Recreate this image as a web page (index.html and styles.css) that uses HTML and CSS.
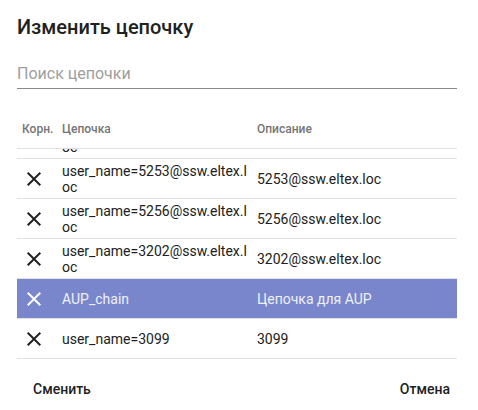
FILE: index.html
```html
<!DOCTYPE html>
<html lang="ru">
<head>
<meta charset="utf-8">
<title>Изменить цепочку</title>
<link rel="stylesheet" href="styles.css">
</head>
<body>
<div class="dialog">
  <h1 class="title">Изменить цепочку</h1>
  <div class="search">
    <input class="search-input" type="text" placeholder="Поиск цепочки">
  </div>
  <div class="table">
    <div class="row head">
      <div class="cell c1">Корн.</div>
      <div class="cell c2">Цепочка</div>
      <div class="cell c3">Описание</div>
    </div>
    <div class="body">
      <div class="rows">
        <div class="row item">
          <div class="cell c1"><svg class="x" viewBox="0 0 24 24"><path d="M19 6.41L17.59 5 12 10.59 6.41 5 5 6.41 10.59 12 5 17.59 6.41 19 12 13.41 17.59 19 19 17.59 13.41 12z"/></svg></div>
          <div class="cell c2">user_name=5250@ssw.eltex.loc</div>
          <div class="cell c3">5250@ssw.eltex.loc</div>
        </div>
        <div class="row item">
          <div class="cell c1"><svg class="x" viewBox="0 0 24 24"><path d="M19 6.41L17.59 5 12 10.59 6.41 5 5 6.41 10.59 12 5 17.59 6.41 19 12 13.41 17.59 19 19 17.59 13.41 12z"/></svg></div>
          <div class="cell c2">user_name=5253@ssw.eltex.loc</div>
          <div class="cell c3">5253@ssw.eltex.loc</div>
        </div>
        <div class="row item">
          <div class="cell c1"><svg class="x" viewBox="0 0 24 24"><path d="M19 6.41L17.59 5 12 10.59 6.41 5 5 6.41 10.59 12 5 17.59 6.41 19 12 13.41 17.59 19 19 17.59 13.41 12z"/></svg></div>
          <div class="cell c2">user_name=5256@ssw.eltex.loc</div>
          <div class="cell c3">5256@ssw.eltex.loc</div>
        </div>
        <div class="row item">
          <div class="cell c1"><svg class="x" viewBox="0 0 24 24"><path d="M19 6.41L17.59 5 12 10.59 6.41 5 5 6.41 10.59 12 5 17.59 6.41 19 12 13.41 17.59 19 19 17.59 13.41 12z"/></svg></div>
          <div class="cell c2">user_name=3202@ssw.eltex.loc</div>
          <div class="cell c3">3202@ssw.eltex.loc</div>
        </div>
        <div class="row item selected">
          <div class="cell c1"><svg class="x" viewBox="0 0 24 24"><path d="M19 6.41L17.59 5 12 10.59 6.41 5 5 6.41 10.59 12 5 17.59 6.41 19 12 13.41 17.59 19 19 17.59 13.41 12z"/></svg></div>
          <div class="cell c2">AUP_chain</div>
          <div class="cell c3">Цепочка для AUP</div>
        </div>
        <div class="row item">
          <div class="cell c1"><svg class="x" viewBox="0 0 24 24"><path d="M19 6.41L17.59 5 12 10.59 6.41 5 5 6.41 10.59 12 5 17.59 6.41 19 12 13.41 17.59 19 19 17.59 13.41 12z"/></svg></div>
          <div class="cell c2">user_name=3099</div>
          <div class="cell c3">3099</div>
        </div>
      </div>
    </div>
  </div>
  <div class="actions">
    <button class="btn btn-left" type="button">Сменить</button>
    <button class="btn btn-right" type="button">Отмена</button>
  </div>
</div>
</body>
</html>
```
FILE: styles.css
```css
html, body {
  margin: 0;
  padding: 0;
  background: #ffffff;
}
body {
  font-family: Roboto, "Noto Sans", Arial, sans-serif;
  color: #212121;
}
.dialog {
  padding: 15px 21px 0 17px;
  box-sizing: border-box;
  width: 478px;
}
.title {
  margin: 0;
  font-size: 20px;
  line-height: 24px;
  font-weight: 500;
  color: #212121;
}
.search {
  margin-top: 25px;
  border-bottom: 1px solid #8a8a8a;
  padding-bottom: 4px;
}
.search-input {
  display: block;
  width: 100%;
  border: 0;
  outline: none;
  padding: 0;
  margin: 0;
  font-family: inherit;
  font-size: 16px;
  line-height: 20px;
  height: 20px;
  color: #212121;
  background: transparent;
}
.search-input::placeholder {
  color: #9e9e9e;
}
.table {
  margin-top: 32px;
}
.row {
  display: grid;
  grid-template-columns: 40px 195px 1fr;
  align-items: center;
}
.cell {
  padding-left: 5px;
}
.head {
  font-size: 12px;
  line-height: 16px;
  font-weight: 500;
  color: #757575;
  padding-bottom: 11px;
  border-bottom: 1px solid #e0e0e0;
}
.body {
  height: 210px;
  overflow: hidden;
}
.rows {
  margin-top: -30px;
}
.item {
  height: 39px;
  border-bottom: 1px solid #e0e0e0;
  font-size: 14px;
  line-height: 16px;
  color: #212121;
}
.item .c2 {
  word-break: break-all;
}
.item .c1 {
  display: flex;
  align-items: center;
}
.x {
  width: 24px;
  height: 24px;
  fill: #212121;
  display: block;
}
.selected {
  background: #7986cb;
  color: #eef0fa;
}
.selected .x {
  fill: #ffffff;
}
.actions {
  display: flex;
  justify-content: space-between;
  margin-top: 12px;
}
.btn {
  border: 0;
  background: transparent;
  font-family: inherit;
  font-size: 14px;
  font-weight: 500;
  line-height: 36px;
  height: 36px;
  color: #212121;
  padding: 0 16px;
  margin: 0;
  cursor: pointer;
}
.btn-right {
  padding: 0 7px 0 16px;
}
```
